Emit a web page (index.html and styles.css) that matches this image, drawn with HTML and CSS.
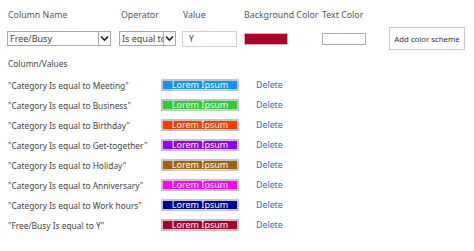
FILE: index.html
```html
<!DOCTYPE html>
<html>
<head>
<meta charset="utf-8">
<link rel="stylesheet" href="styles.css">
</head>
<body>
<div class="page">
  <div class="form">
    <div class="lbl">Column Name</div>
    <div class="lbl">Operator</div>
    <div class="lbl">Value</div>
    <div class="lbl">Background Color</div>
    <div class="lbl">Text Color</div>
    <div></div>

    <div class="cell"><div class="select sel-col"><span class="sel-text">Free/Busy</span><span class="arrow"><svg width="9" height="7" viewBox="0 0 9 7"><path d="M1 1.5 L4.5 5 L8 1.5" fill="none" stroke="#222" stroke-width="1.6"/></svg></span></div></div>
    <div class="cell"><div class="select sel-op"><span class="sel-text">Is equal to</span><span class="arrow"><svg width="9" height="7" viewBox="0 0 9 7"><path d="M1 1.5 L4.5 5 L8 1.5" fill="none" stroke="#222" stroke-width="1.6"/></svg></span></div></div>
    <div class="cell"><div class="input">Y</div></div>
    <div class="cell"><div class="swatch bg"></div></div>
    <div class="cell"><div class="swatch fg"></div></div>
    <div class="cell"><div class="btn">Add color scheme</div></div>
  </div>

  <div class="section">Column/Values</div>

  <div class="list">
    <div class="row"><span class="cond">"Category Is equal to Meeting"</span><span class="sample c1">Lorem Ipsum</span><a class="del">Delete</a></div>
    <div class="row"><span class="cond">"Category Is equal to Business"</span><span class="sample c2">Lorem Ipsum</span><a class="del">Delete</a></div>
    <div class="row"><span class="cond">"Category Is equal to Birthday"</span><span class="sample c3">Lorem Ipsum</span><a class="del">Delete</a></div>
    <div class="row"><span class="cond">"Category Is equal to Get-together"</span><span class="sample c4">Lorem Ipsum</span><a class="del">Delete</a></div>
    <div class="row"><span class="cond">"Category Is equal to Holiday"</span><span class="sample c5">Lorem Ipsum</span><a class="del">Delete</a></div>
    <div class="row"><span class="cond">"Category Is equal to Anniversary"</span><span class="sample c6">Lorem Ipsum</span><a class="del">Delete</a></div>
    <div class="row"><span class="cond">"Category Is equal to Work hours"</span><span class="sample c7">Lorem Ipsum</span><a class="del">Delete</a></div>
    <div class="row"><span class="cond">"Free/Busy Is equal to Y"</span><span class="sample c8">Lorem Ipsum</span><a class="del">Delete</a></div>
  </div>
</div>
</body>
</html>
```
FILE: styles.css
```css
html, body { margin: 0; padding: 0; background: #fff; }
body {
  font-family: "Noto Sans", "Open Sans", sans-serif;
  font-size: 8.4px;
  color: #444;
}
.page { padding: 8px 0 0 8px; }
.form {
  display: grid;
  grid-template-columns: 113px 62px 61px 78px 67px 76px;
  grid-template-rows: 15px 27px;
  row-gap: 2px;
}
.lbl { color: #555; font-size: 8.8px; line-height: 15px; white-space: nowrap; }
.cell { display: flex; align-items: center; }
.select {
  box-sizing: border-box;
  height: 15px;
  border: 1px solid #a8a8a8;
  display: flex;
  align-items: stretch;
  background: #fff;
  margin-left: -1px;
}
.sel-col { width: 104px; }
.sel-op { width: 57px; margin-left: -2px; }
.sel-text {
  flex: 1;
  overflow: hidden;
  white-space: nowrap;
  line-height: 13px;
  padding-left: 2px;
  font-size: 9px;
  color: #444;
}
.arrow {
  width: 11px;
  border-left: 1px solid #a8a8a8;
  display: flex;
  align-items: center;
  justify-content: center;
}
.input {
  box-sizing: border-box;
  width: 55px;
  height: 16px;
  border: 1px solid #d0d0d0;
  line-height: 14px;
  padding-left: 6px;
  margin-left: -1px;
}
.swatch {
  box-sizing: border-box;
  width: 44px;
  height: 12px;
}
.swatch.bg { background: #ad0028; border: 1px solid #e0b0b8; }
.swatch.fg { background: #fff; border: 1px solid #aaa; }
.btn {
  box-sizing: border-box;
  width: 76px;
  height: 23px;
  border: 1px solid #c8c8c8;
  font-size: 7.8px;
  color: #333;
  display: flex;
  align-items: center;
  justify-content: center;
}
.section { margin-top: 4px; line-height: 15px; }
.list { margin-top: 4px; display: flex; flex-direction: column; }
.row { display: flex; align-items: center; height: 20px; }
.cond { width: 153px; white-space: nowrap; }
.sample {
  box-sizing: border-box;
  width: 78px;
  height: 12px;
  border: 2px solid #c4c4c4;
  color: #fff;
  font-size: 9px;
  line-height: 8px;
  text-align: center;
  text-decoration: underline;
  text-decoration-color: rgba(255,255,255,0.6);
}
.c1 { background: #1590ff; }
.c2 { background: #2ecc2e; }
.c3 { background: #ff3c00; }
.c4 { background: #9300ff; }
.c5 { background: #a0620a; }
.c6 { background: #ff00ff; }
.c7 { background: #00009e; }
.c8 { background: #ad0028; }
.del { margin-left: 17px; color: #1a73c9; font-size: 8.8px; }
```
